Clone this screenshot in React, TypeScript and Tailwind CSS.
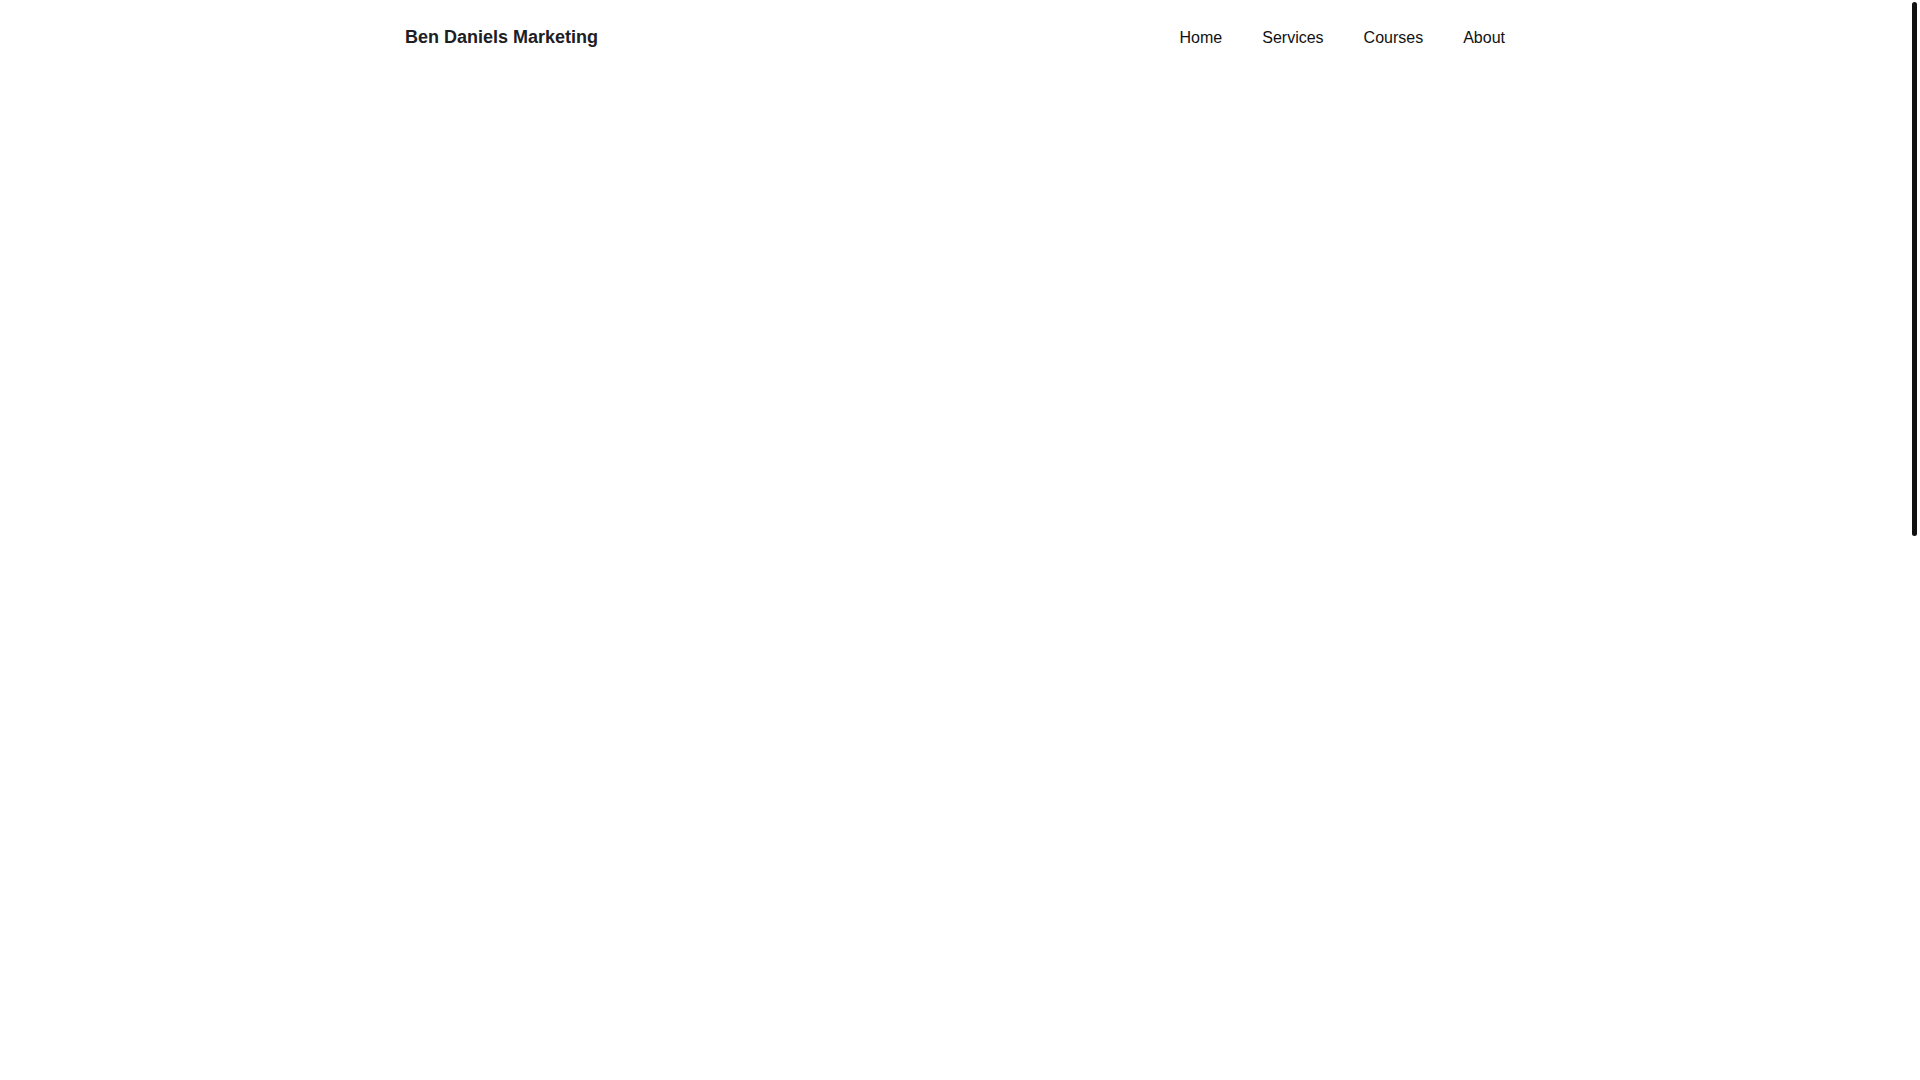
export default function App() {
    const links = ["Home", "Services", "Courses", "About"];

    return (
        <div className="flex h-screen w-full overflow-hidden bg-white font-['Liberation_Sans',Arial,sans-serif]">
            <div className="min-w-0 flex-1">
                <header className="mx-auto flex h-[74px] max-w-[1100px] items-center justify-between">
                    <a href="#" className="text-lg font-bold text-[#1c2024]">
                        Ben Daniels Marketing
                    </a>
                    <nav className="flex items-center gap-10 pt-[2px]">
                        {links.map((link) => (
                            <a key={link} href="#" className="text-base text-[#111111]">
                                {link}
                            </a>
                        ))}
                    </nav>
                </header>
            </div>

            {/* scrollbar */}
            <div className="w-[10px] shrink-0 bg-white">
                <div className="mt-[2px] ml-[2px] h-[534px] w-[5px] rounded-full bg-[#111111]" />
            </div>
        </div>
    );
}
